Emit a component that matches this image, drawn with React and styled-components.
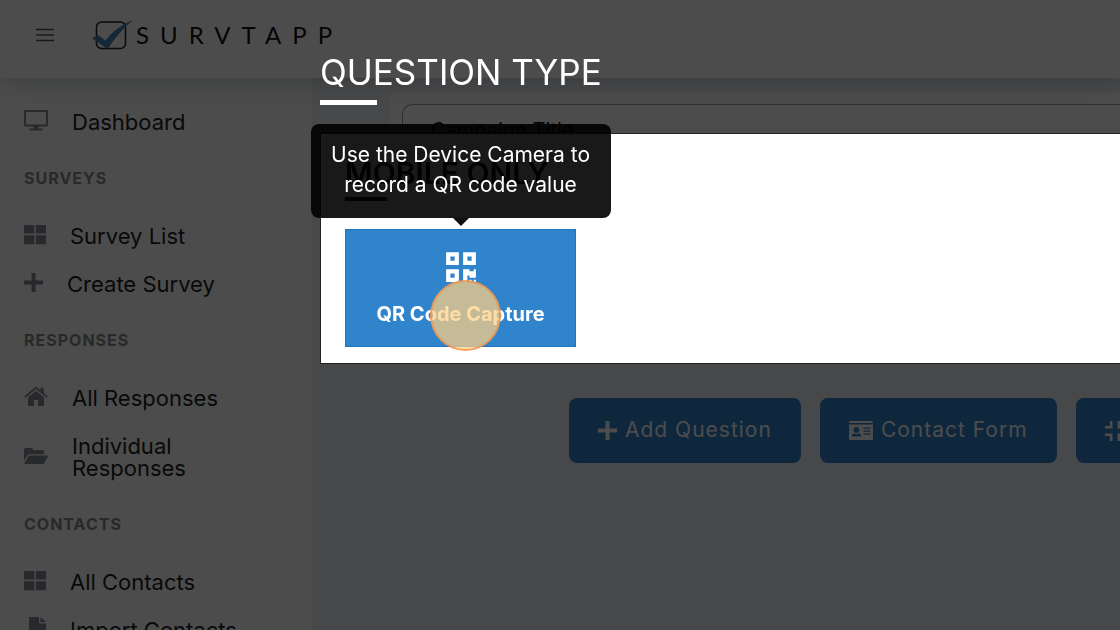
import styled, { createGlobalStyle } from "styled-components";
import { FaQrcode } from "react-icons/fa";

const menu = [
  { items: [{ icon: "monitor", text: "Dashboard" }] },
  {
    title: "Surveys",
    items: [
      { icon: "grid", text: "Survey List" },
      { icon: "plus", text: "Create Survey" },
    ],
  },
  {
    title: "Responses",
    items: [
      { icon: "home", text: "All Responses" },
      { icon: "folder", text: "Individual Responses" },
    ],
  },
  {
    title: "Contacts",
    items: [
      { icon: "grid", text: "All Contacts" },
      { icon: "file", text: "Import Contacts" },
    ],
  },
];

const MonitorIcon = () => (
  <svg width="24" height="24" viewBox="0 0 24 24" fill="none" stroke="currentColor" strokeWidth="2">
    <rect x="1" y="2" width="22" height="14.500" rx="0.500" />
    <path d="M12 16.500v4" strokeWidth="5" />
    <path d="M5.500 20.500h13" />
  </svg>
);

const GridIcon = () => (
  <svg width="22" height="24" viewBox="0 0 22 24" fill="currentColor">
    <path d="M0 2h10.3v8.500H0zM11.700 2H22v8.500H11.700zM0 12.200h10.300v9H0zM11.700 12.200H22v9H11.700z" />
  </svg>
);

const PlusIcon = () => (
  <svg width="19" height="24" viewBox="0 0 19 24" fill="currentColor">
    <path d="M7.500 2h4v7.500H19v4h-7.500V21h-4v-7.500H0v-4h7.500z" />
  </svg>
);

const HomeIcon = () => (
  <svg width="24" height="24" viewBox="0 0 24 24" fill="currentColor">
    <path d="M12 5.800 20 12.500V20a1 1 0 0 1-1 1h-5v-6h-4v6H5a1 1 0 0 1-1-1v-7.500z" />
    <path d="m12 1.500 4.500 3.700V2.500h3.200v5.400l4 3.400-1.200 1.400L12 4 1.500 12.700.3 11.300z" />
  </svg>
);

const FolderIcon = () => (
  <svg width="24" height="24" viewBox="0 0 24 24" fill="currentColor">
    <path d="M0 17V5.500Q0 4 1.500 4h6Q9 4 9 5.500v.8h9.500q1.500 0 1.500 1.500v2.400H5.500q-1.500 0-2.400 1.500z" />
    <path d="M6 11.500h17.200q1.200 0 .6 1.200l-3.300 6.100Q20 20 18.700 20H1.300q-1.200 0-.6-1.200L4 12.700q.6-1.200 2-1.200z" />
  </svg>
);

const FileIcon = () => (
  <svg width="22" height="24" viewBox="0 0 22 24" fill="currentColor">
    <path d="M5 0h10v6.500h7V24H5v-5h5v3.500l5-5-5-5V16H5z" />
    <path d="M16.500 0 22 5h-5.500z" />
  </svg>
);

const AddressIcon = () => (
  <svg width="24" height="20" viewBox="0 0 24 20" fill="currentColor">
    <path d="M1.500 0h21A1.500 1.500 0 0 1 24 1.500V2H0v-.5A1.500 1.500 0 0 1 1.500 0z" />
    <path
      fillRule="evenodd"
      d="M0 3.500h24v14a1.500 1.500 0 0 1-1.500 1.500h-21A1.500 1.500 0 0 1 0 17.500zM7.500 6a2.900 2.900 0 1 0 0 5.800 2.900 2.900 0 0 0 0-5.800zM5 12.500c-1.300 0-2.200 1-2.200 3h9.400c0-2-.9-3-2.200-3-1.600 1-3.400 1-5 0zM14.500 6.500v1.300h7V6.500zM14.500 9.500v1.300h7V9.500zM14.500 12.500v1.300h7v-1.300z"
    />
  </svg>
);

const CompressIcon = () => (
  <svg width="20" height="20" viewBox="0 0 20 20" fill="none" stroke="currentColor" strokeWidth="2.600">
    <path d="M0 6.200h6.200V0M13.800 0v6.200H20M0 13.800h6.200V20M20 13.800h-6.200V20" />
  </svg>
);

const LogoMark = () => (
  <svg width="44" height="32" viewBox="0 0 44 32">
    <rect x="4.500" y="3" width="29" height="26.500" rx="5" fill="none" stroke="#1a2029" strokeWidth="1.500" />
    <path d="M0 19.500 6 16l7.500 5.500C20 13 29 6 41 1 31 9 23 19 15.500 30 11 27 6 23 0 19.500z" fill="#3f84b8" />
  </svg>
);

const icons = {
  monitor: <MonitorIcon />,
  grid: <GridIcon />,
  plus: <PlusIcon />,
  home: <HomeIcon />,
  folder: <FolderIcon />,
  file: <FileIcon />,
};

const App = () => {
  return (
    <>
      <GlobalStyle />
      <Page>
        <Header>
          <MenuButton aria-label="Toggle menu">
            <svg width="18" height="14" viewBox="0 0 18 14" stroke="currentColor" strokeWidth="1.300">
              <path d="M0 1.500h18M0 7h18M0 12.500h18" />
            </svg>
          </MenuButton>
          <Logo href="#">
            <LogoMark />
            <LogoText>SURVTAPP</LogoText>
          </Logo>
        </Header>
        <Body>
          <Sidebar>
            {menu.map((group, index) => (
              <div key={index}>
                {group.title && <GroupTitle>{group.title}</GroupTitle>}
                {group.items.map((item) => (
                  <MenuLink href="#" key={item.text}>
                    {icons[item.icon]}
                    <span>{item.text}</span>
                  </MenuLink>
                ))}
              </div>
            ))}
          </Sidebar>
          <Main>
            <Card>
              <TitleInput aria-label="Campaign Title" placeholder="Campaign Title" />
            </Card>
            <Actions>
              <ActionButton>
                <PlusIcon />
                Add Question
              </ActionButton>
              <ActionButton>
                <AddressIcon />
                Contact Form
              </ActionButton>
              <ActionButton aria-label="Page Break">
                <CompressIcon />
              </ActionButton>
            </Actions>
          </Main>
        </Body>
      </Page>

      <Overlay>
        <ModalTitle>QUESTION TYPE</ModalTitle>
        <Modal role="dialog" aria-label="Question type">
          <SectionTitle>MOBILE ONLY</SectionTitle>
          <TypeButton aria-describedby="qr-tip">
            <FaQrcode size={34} />
            QR Code Capture
            <ClickMark />
            <Tooltip id="qr-tip" role="tooltip">
              Use the Device Camera to record a QR code value
            </Tooltip>
          </TypeButton>
        </Modal>
      </Overlay>
    </>
  );
};
export default App;

const GlobalStyle = createGlobalStyle`
  * {
    box-sizing: border-box;
  }
  body {
    margin: 0;
    overflow: hidden;
    font-family: Inter, "Liberation Sans", sans-serif;
  }
  button, input {
    font-family: inherit;
  }
`;

const Page = styled.div`
  display: flex;
  flex-direction: column;
  height: 100vh;
  overflow: hidden;
`;

const Header = styled.header`
  display: flex;
  align-items: center;
  flex-shrink: 0;
  gap: 38px;
  height: 78px;
  padding: 0 36px 8px;
  background: #fff;
  box-shadow: 0 0 28px rgba(70, 90, 100, 0.4);
  z-index: 1;
`;

const MenuButton = styled.button`
  display: flex;
  padding: 0;
  border: 0;
  background: none;
  color: #555;
`;

const Logo = styled.a`
  display: flex;
  align-items: center;
  color: #111;
  text-decoration: none;
`;

const LogoText = styled.span`
  font-family: Lato, sans-serif;
  font-size: 24px;
  line-height: 28px;
  letter-spacing: 11px;
`;

const Body = styled.div`
  display: flex;
  flex: 1;
  min-height: 0;
`;

const Sidebar = styled.nav`
  flex-shrink: 0;
  width: 312px;
  padding: 20px 72px 0 24px;
  overflow: hidden;
  background: #fff;
`;

const GroupTitle = styled.h2`
  margin: 0 0 2px;
  color: #8b8b8b;
  font-size: 16px;
  font-weight: 700;
  line-height: 64px;
  letter-spacing: 1px;
  text-transform: uppercase;
`;

const MenuLink = styled.a`
  display: flex;
  align-items: center;
  gap: 24px;
  padding: 13px 0;
  color: #1c1f24;
  font-size: 22px;
  line-height: 22px;
  text-decoration: none;

  svg {
    flex-shrink: 0;
    margin: -4px 0 -2px;
    color: #868a94;
  }
`;

const Main = styled.main`
  flex: 1;
  min-width: 0;
  background: #eef2f8;
`;

const Card = styled.section`
  height: 230px;
  margin: 14px 0 0 78px;
  padding: 12px 0 0 12px;
  border-radius: 8px 0 0 0;
  background: #fff;
`;

const TitleInput = styled.input`
  width: 100%;
  height: 52px;
  padding: 0 28px;
  border: 1px solid #999;
  border-right: 0;
  border-radius: 10px 0 0 10px;
  font-size: 20px;

  &::placeholder {
    color: #111;
  }
`;

const Actions = styled.div`
  display: flex;
  gap: 19px;
  margin: 76px 0 0 257px;
`;

const ActionButton = styled.button`
  display: flex;
  flex-shrink: 0;
  align-items: center;
  gap: 8px;
  height: 65px;
  padding: 0 29px 3px;
  border: 0;
  border-radius: 8px;
  background: #2f84cb;
  color: #fff;
  font-size: 21px;
  letter-spacing: 1px;

  svg {
    margin-top: 3px;
  }
`;

const Overlay = styled.div`
  position: fixed;
  inset: 0;
  z-index: 2;
  padding: 54px 0 0 320px;
  background: rgba(0, 0, 0, 0.7);
`;

const ModalTitle = styled.h1`
  margin: 0 0 28px;
  color: #fff;
  font-size: 35px;
  font-weight: 400;
  line-height: 36px;

  &::after {
    content: "";
    display: block;
    width: 57px;
    height: 5px;
    margin-top: 10px;
    background: #fff;
  }
`;

const Modal = styled.section`
  height: 231px;
  padding: 24px;
  border: 1px solid #222;
  border-right: 0;
  background: #fff;
`;

const SectionTitle = styled.h2`
  margin: 0 0 28px;
  color: #111;
  font-size: 30px;
  font-weight: 600;
  line-height: 30px;

  &::after {
    content: "";
    display: block;
    width: 42px;
    height: 4px;
    margin-top: 9px;
    background: #0d1030;
  }
`;

const TypeButton = styled.button`
  position: relative;
  display: flex;
  flex-direction: column;
  align-items: center;
  gap: 19px;
  width: 231px;
  height: 118px;
  padding: 20px 0 0;
  border: 1px solid #1f74bd;
  background: #2f84cb;
  color: #fff;
  font-size: 20px;
  font-weight: 700;
  line-height: 22px;
`;

const ClickMark = styled.span`
  position: absolute;
  top: 50px;
  left: 84px;
  width: 71px;
  height: 71px;
  border: 2px solid rgba(240, 140, 70, 0.75);
  border-radius: 50%;
  background: rgba(255, 208, 130, 0.72);
`;

const Tooltip = styled.span`
  position: absolute;
  bottom: 128px;
  left: 50%;
  width: 300px;
  padding: 16px 18px 18px;
  border-radius: 8px;
  transform: translateX(-50%);
  background: rgba(0, 0, 0, 0.9);
  font-size: 21px;
  font-weight: 400;
  line-height: 30px;

  &::after {
    content: "";
    position: absolute;
    top: 100%;
    left: 50%;
    margin-left: -8px;
    border: 8px solid transparent;
    border-top-color: #111;
    border-bottom: 0;
  }
`;
